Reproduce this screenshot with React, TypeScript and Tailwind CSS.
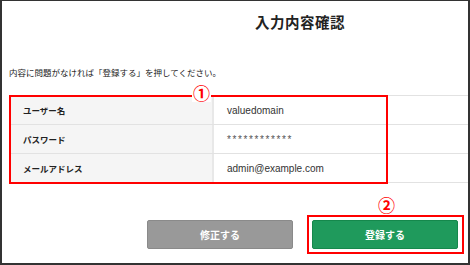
const rows = [
  { label: "ユーザー名", value: "valuedomain" },
  { label: "パスワード", value: "************" },
  { label: "メールアドレス", value: "admin@example.com" },
];

const jp = "font-['Noto_Sans_CJK_JP',sans-serif]";

export default function App() {
  return (
    <div
      className={`w-[470px] h-[265px] bg-white border-x-2 border-t border-b-2 border-[#333] flex flex-col text-[#222] ${jp}`}
    >
      <div className="flex justify-center pl-[130px] pt-[11px]">
        <h1 className="text-[14.5px] font-bold leading-[20px] tracking-[0.5px]">
          入力内容確認
        </h1>
      </div>

      <p className="mt-[33px] pl-[7px] text-[8.5px] leading-[14px]">
        内容に問題がなければ「登録する」を押してください。
      </p>

      <div className="relative mt-[16px] ml-[7px] border-t border-[#e2e2e2]">
        {rows.map((row, i) => (
          <div key={row.label} className="flex h-[29px] border-b border-[#e2e2e2]">
            <div className="w-[205px] bg-[#f5f5f5] border-r-2 border-[#e8e8e8] flex items-center pl-[14px] text-[8.5px] font-bold">
              {row.label}
            </div>
            <div
              className={
                i === 1
                  ? "flex items-center pl-[13px] text-[10px] tracking-[1.6px] font-['Liberation_Sans',sans-serif] text-[#555]"
                  : "flex items-center pl-[13px] text-[10px] font-['Liberation_Sans','Noto_Sans_CJK_JP',sans-serif] text-[#333]"
              }
            >
              {row.value}
            </div>
          </div>
        ))}
        <div className="absolute left-0 top-[-1px] w-[379px] h-[89px] border-2 border-[#f00]" />
        <span className="absolute left-[183px] top-[-13px] bg-white px-[1px] text-[17px] font-bold leading-[19px] text-[#f00]">
          ①
        </span>
      </div>

      <div className="relative mt-[37px] flex justify-end gap-[19px] pr-[10px]">
        <button className="w-[146px] h-[29px] bg-[#999] border border-[#8a8a8a] rounded-[2px] text-white text-[10px] font-bold">
          修正する
        </button>
        <button className="w-[146px] h-[29px] bg-[#1f9a5c] border border-[#15884c] rounded-[2px] text-white text-[10px] font-bold">
          登録する
        </button>
        <div className="absolute right-[4px] top-[-5px] w-[157px] h-[39px] border-2 border-[#f00]" />
        <span className="absolute left-[376px] top-[-25px] text-[17px] font-bold leading-[19px] text-[#f00]">
          ②
        </span>
      </div>
    </div>
  );
}
